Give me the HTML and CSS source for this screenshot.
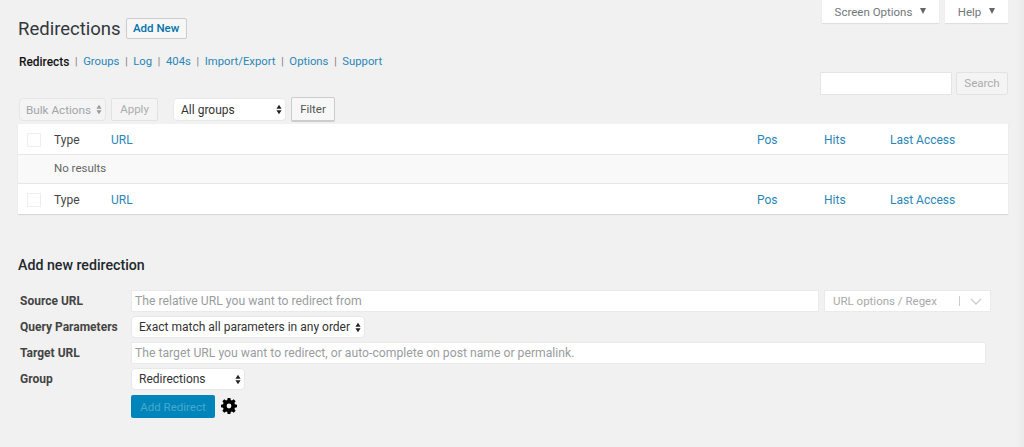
FILE: index.html
```html
<!DOCTYPE html>
<html lang="en">
<head>
<meta charset="utf-8">
<title>Redirections</title>
<link rel="stylesheet" href="styles.css">
</head>
<body>
<div class="edge"></div>
<div class="wrap">
  <div class="meta">
    <div class="meta-tab meta-screen">Screen Options<span class="arrow"></span></div>
    <div class="meta-tab meta-help">Help<span class="arrow"></span></div>
  </div>
  <div class="heading">
    <h1>Redirections</h1>
    <a class="add-new">Add New</a>
  </div>
  <ul class="subnav">
    <li class="current">Redirects</li>
    <li class="sep">|</li>
    <li>Groups</li>
    <li class="sep">|</li>
    <li>Log</li>
    <li class="sep">|</li>
    <li>404s</li>
    <li class="sep">|</li>
    <li>Import/Export</li>
    <li class="sep">|</li>
    <li>Options</li>
    <li class="sep">|</li>
    <li>Support</li>
  </ul>
  <div class="search">
    <div class="search-input"></div>
    <div class="btn btn-disabled search-btn">Search</div>
  </div>
  <div class="actions">
    <div class="select select-disabled bulk">Bulk Actions<svg class="updown" viewBox="0 0 7 12" width="6" height="11"><path d="M3.500 0.500 6.500 5H.5zM3.500 11.500 .5 7h6z"/></svg></div>
    <div class="btn btn-disabled apply">Apply</div>
    <div class="select groups">All groups<svg class="updown" viewBox="0 0 7 12" width="6" height="11"><path d="M3.500 0.500 6.500 5H.5zM3.500 11.500 .5 7h6z"/></svg></div>
    <div class="btn filter">Filter</div>
  </div>
  <div class="table">
    <div class="row">
      <span class="check"></span><span class="c-type">Type</span><a class="c-url">URL</a><a class="c-pos">Pos</a><a class="c-hits">Hits</a><a class="c-last">Last Access</a>
    </div>
    <div class="row row-empty">No results</div>
    <div class="row">
      <span class="check"></span><span class="c-type">Type</span><a class="c-url">URL</a><a class="c-pos">Pos</a><a class="c-hits">Hits</a><a class="c-last">Last Access</a>
    </div>
  </div>
  <h2>Add new redirection</h2>
  <div class="form">
    <label>Source URL</label>
    <div class="field-line">
      <div class="input source">The relative URL you want to redirect from</div>
      <div class="regex">URL options / Regex<span class="bar"></span><svg class="chev" viewBox="0 0 12 7" width="12" height="7"><path d="M1 1l5 5 5-5"/></svg></div>
    </div>
    <label>Query Parameters</label>
    <div class="field-line">
      <div class="select query">Exact match all parameters in any order<svg class="updown dark" viewBox="0 0 7 12" width="6" height="11"><path d="M3.500 0.500 6.500 5H.5zM3.500 11.500 .5 7h6z"/></svg></div>
    </div>
    <label>Target URL</label>
    <div class="field-line">
      <div class="input target">The target URL you want to redirect, or auto-complete on post name or permalink.</div>
    </div>
    <label>Group</label>
    <div class="field-line">
      <div class="select group-select">Redirections<svg class="updown dark" viewBox="0 0 7 12" width="6" height="11"><path d="M3.500 0.500 6.500 5H.5zM3.500 11.500 .5 7h6z"/></svg></div>
    </div>
    <span></span>
    <div class="field-line submit-line">
      <div class="primary">Add Redirect</div>
      <svg class="gear" viewBox="0 0 20 20" width="16" height="16"><path fill-rule="evenodd" d="M8.300 0h3.400l.5 2.600 1.500.6L15.900 1.700l2.400 2.400-1.500 2.200.6 1.500 2.600.5v3.400l-2.600.5-.6 1.500 1.500 2.200-2.400 2.400-2.200-1.500-1.500.6-.5 2.600H8.300l-.5-2.600-1.500-.6-2.200 1.500-2.400-2.400 1.500-2.200-.6-1.500L0 11.700V8.300l2.600-.5.6-1.500-1.500-2.200 2.400-2.400 2.200 1.500 1.500-.6zM10 7a3 3 0 1 0 0 6 3 3 0 0 0 0-6z"/></svg>
    </div>
  </div>
</div>
</body>
</html>
```

FILE: styles.css
```css
* { box-sizing: border-box; }
html, body { margin: 0; padding: 0; }
body {
  height: 447px;
  overflow: hidden;
  background: #f1f1f1;
  color: #444;
  font-family: Roboto, "Liberation Sans", sans-serif;
  font-size: 12px;
  position: relative;
}
.edge {
  position: absolute;
  top: 0;
  right: 0;
  width: 8px;
  height: 100%;
  background: linear-gradient(to right, #f1f1f1, #eaeaea);
}
.wrap { padding: 0 16px 0 18px; position: relative; }
a { color: #0073aa; }

.meta { float: right; display: flex; gap: 6px; }
.meta-tab {
  height: 23px;
  background: #fff;
  box-shadow: 0 1px 1px rgba(0,0,0,.08);
  color: #72777c;
  font-size: 11.500px;
  line-height: 24px;
  text-align: center;
}
.meta-screen { width: 117px; }
.meta-help { width: 63px; }
.arrow {
  display: inline-block;
  margin-left: 8px;
  vertical-align: 2px;
  border-style: solid;
  border-width: 6px 3.500px 0;
  border-color: #666 transparent transparent;
}

.heading { display: flex; align-items: center; padding-top: 18px; height: 39px; }
h1 { margin: 0; font-size: 18.500px; font-weight: 400; color: #32373c; }
.add-new {
  margin-left: 5px;
  width: 61px;
  height: 21px;
  background: #f7f7f7;
  border: 1px solid #ccc;
  border-radius: 2px;
  font-size: 11.500px;
  font-weight: 500;
  line-height: 19px;
  text-align: center;
}

.subnav {
  list-style: none;
  margin: 0;
  padding: 0 0 0 1px;
  display: flex;
  gap: 5.700px;
  height: 16px;
  margin-top: 15px;
  font-size: 11.300px;
  line-height: 16px;
  color: #2a86b8;
}
.subnav .current { color: #111; font-weight: 500; font-size: 11.900px; }
.subnav .sep { color: #777; font-size: 10px; }

.search { display: flex; justify-content: flex-end; gap: 4px; margin-top: 2px; height: 23px; clear: both; }
.search-input { width: 132px; height: 23px; background: #fff; border: 1px solid #e4e4e4; }
.search-btn { width: 52px; }

.btn {
  height: 23px;
  border: 1px solid #ccc;
  border-radius: 2px;
  background: #f7f7f7;
  color: #555;
  font-size: 11.500px;
  line-height: 21px;
  text-align: center;
}
.btn-disabled { border-color: #e2e2e2; background: #f4f4f4; color: #a9acae; }

.actions { display: flex; align-items: center; margin-top: 2px; height: 24px; }
.select {
  position: relative;
  background: #fff;
  border: 1px solid #e8e8e8;
  border-radius: 4px;
  color: #333;
  height: 23px;
  line-height: 22px;
  padding-left: 7px;
  font-size: 12px;
}
.updown { position: absolute; right: 3px; top: 5px; fill: #222; }
.select-disabled { background: #f4f4f4; border-color: #e6e6e6; color: #a0a5aa; }
.select-disabled .updown { fill: #999; }
.bulk { width: 87px; margin-left: 1px; font-size: 11.700px; padding-left: 6px; }
.apply { width: 47px; margin-left: 5px; height: 23px; }
.groups { width: 113px; margin-left: 15px; }
.filter { width: 44px; margin-left: 5px; height: 25px; line-height: 22px; border-bottom-width: 2px; color: #555; }

.table {
  margin-top: 3px;
  background: #fff;
  box-shadow: 0 1px 1px rgba(0,0,0,.1);
}
.row {
  display: grid;
  grid-template-columns: 36px 57px 646px 67px 66px 1fr;
  align-items: center;
  height: 30px;
  padding-top: 1px;
  color: #444;
  font-size: 12px;
}
.row a { color: #2a86b8; }
.check {
  width: 14px;
  height: 14px;
  margin-left: 9px;
  background: #fff;
  border: 1px solid #eee;
}
.row-empty {
  display: block;
  background: #f9f9f9;
  border-top: 1px solid #e6e6e6;
  border-bottom: 1px solid #e6e6e6;
  padding-top: 0;
  padding-left: 36px;
  line-height: 27px;
  color: #666;
  font-size: 11.500px;
}

h2 { margin: 43px 0 0; font-size: 14.200px; line-height: 17px; font-weight: 500; color: #23282d; }

.form {
  display: grid;
  grid-template-columns: 113px 1fr;
  grid-auto-rows: min-content;
  row-gap: 3px;
  margin-top: 16px;
}
label {
  padding-left: 2px;
  font-size: 12px;
  font-weight: 700;
  color: #444;
  line-height: 23px;
}
.field-line { display: flex; gap: 5px; height: 23px; }
.input {
  background: #fff;
  border: 1px solid #eaeaea;
  height: 22px;
  padding-left: 3px;
  line-height: 21px;
  color: #9a9da0;
  font-size: 12.200px;
}
.source { width: 688px; }
.target { width: 855px; }
.regex {
  position: relative;
  width: 167px;
  height: 22px;
  background: #fff;
  border: 1px solid #eaeaea;
  padding-left: 8px;
  line-height: 20px;
  color: #a9a9a9;
  font-size: 11.500px;
}
.bar { position: absolute; left: 134px; top: 5px; width: 1px; height: 10px; background: #ccc; }
.chev { position: absolute; left: 145px; top: 7px; fill: none; stroke: #ccc; stroke-width: 1.300; }
.query { width: 234px; height: 22px; line-height: 21px; }
.group-select { width: 114px; height: 22px; line-height: 21px; }
.submit-line { align-items: center; gap: 6px; margin-top: 1px; }
.primary {
  width: 84px;
  height: 23px;
  background: #0085ba;
  border-radius: 2px;
  color: #49a9cc;
  font-size: 11.500px;
  line-height: 24px;
  text-align: center;
}
.gear { fill: #000; margin-bottom: 2px; }
```
